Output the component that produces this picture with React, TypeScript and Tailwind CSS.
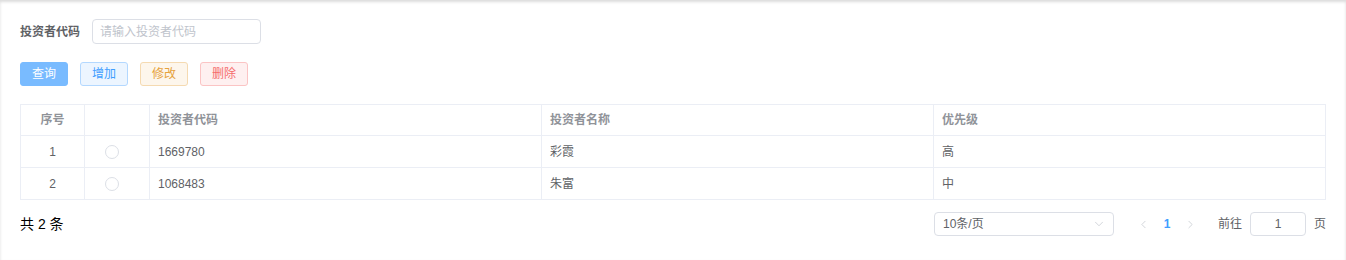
import React from 'react';
import { ChevronDown, ChevronLeft, ChevronRight } from 'lucide-react';

const rows = [
  { id: 1, code: '1669780', name: '彩霞', level: '高' },
  { id: 2, code: '1068483', name: '朱富', level: '中' },
];

const font = { fontFamily: '"Liberation Sans", "Noto Sans CJK SC", sans-serif' };

export default function App() {
  return (
    <div
      className="w-[1346px] h-[260px] bg-white px-5 pt-[19px] shadow-[inset_0_2px_3px_rgba(0,0,0,0.14)]"
      style={font}
    >
      {/* Search form */}
      <div className="flex items-center h-[25px]">
        <label className="text-xs font-bold text-[#606266] w-[72px]">投资者代码</label>
        <input
          className="w-[169px] h-[25px] border border-[#dcdfe6] rounded px-[7px] text-xs text-[#606266] placeholder:text-[#c0c4cc] outline-none"
          placeholder="请输入投资者代码"
        />
      </div>

      {/* Buttons */}
      <div className="flex gap-3 mt-[18px]">
        <button className="w-12 h-6 rounded-[3px] bg-[#79bbff] border border-[#79bbff] text-white text-xs">查询</button>
        <button className="w-12 h-6 rounded-[3px] bg-[#ecf5ff] border border-[#b3d8ff] text-[#409eff] text-xs">增加</button>
        <button className="w-12 h-6 rounded-[3px] bg-[#fdf6ec] border border-[#f5dab1] text-[#e6a23c] text-xs">修改</button>
        <button className="w-12 h-6 rounded-[3px] bg-[#fef0f0] border border-[#fbc4c4] text-[#f56c6c] text-xs">删除</button>
      </div>

      {/* Table */}
      <table className="mt-[18px] w-[1305px] border-collapse table-fixed text-xs">
        <colgroup>
          <col className="w-[64px]" />
          <col className="w-[65px]" />
          <col className="w-[392px]" />
          <col className="w-[392px]" />
          <col className="w-[392px]" />
        </colgroup>
        <thead>
          <tr className="h-[31px] text-[#909399] font-bold">
            <th className="border border-[#ebeef5] text-center font-bold">序号</th>
            <th className="border border-[#ebeef5]"></th>
            <th className="border border-[#ebeef5] text-left px-2 font-bold">投资者代码</th>
            <th className="border border-[#ebeef5] text-left px-2 font-bold">投资者名称</th>
            <th className="border border-[#ebeef5] text-left px-2 font-bold">优先级</th>
          </tr>
        </thead>
        <tbody>
          {rows.map((r) => (
            <tr key={r.id} className="h-8 text-[#606266]">
              <td className="border border-[#ebeef5] text-center">{r.id}</td>
              <td className="border border-[#ebeef5]">
                <div className="ml-[20px] w-[14px] h-[14px] rounded-full border border-[#dcdfe6]" />
              </td>
              <td className="border border-[#ebeef5] px-2">{r.code}</td>
              <td className="border border-[#ebeef5] px-2">{r.name}</td>
              <td className="border border-[#ebeef5] px-2">{r.level}</td>
            </tr>
          ))}
        </tbody>
      </table>

      {/* Footer */}
      <div className="flex items-center mt-3 h-6">
        <span className="text-sm text-black">共 2 条</span>
        <div className="ml-auto flex items-center">
          <div className="w-[180px] h-6 border border-[#dcdfe6] rounded flex items-center pl-2 pr-[7px] text-xs text-[#606266]">
            <span>10条/页</span>
            <ChevronDown size={14} strokeWidth={1.2} className="ml-auto text-[#c0c4cc]" />
          </div>
          <div className="flex items-center ml-[23px] gap-[12px]">
            <ChevronLeft size={13} strokeWidth={1.3} className="text-[#c0c4cc]" />
            <span className="text-xs font-bold text-[#409eff] w-[10px] text-center">1</span>
            <ChevronRight size={13} strokeWidth={1.3} className="text-[#c0c4cc]" />
          </div>
          <span className="ml-[21px] text-xs text-[#606266]">前往</span>
          <div className="ml-[8px] w-[56px] h-6 border border-[#dcdfe6] rounded flex items-center justify-center text-xs text-[#606266]">1</div>
          <span className="ml-[8px] text-xs text-[#606266]">页</span>
        </div>
      </div>
    </div>
  );
}
